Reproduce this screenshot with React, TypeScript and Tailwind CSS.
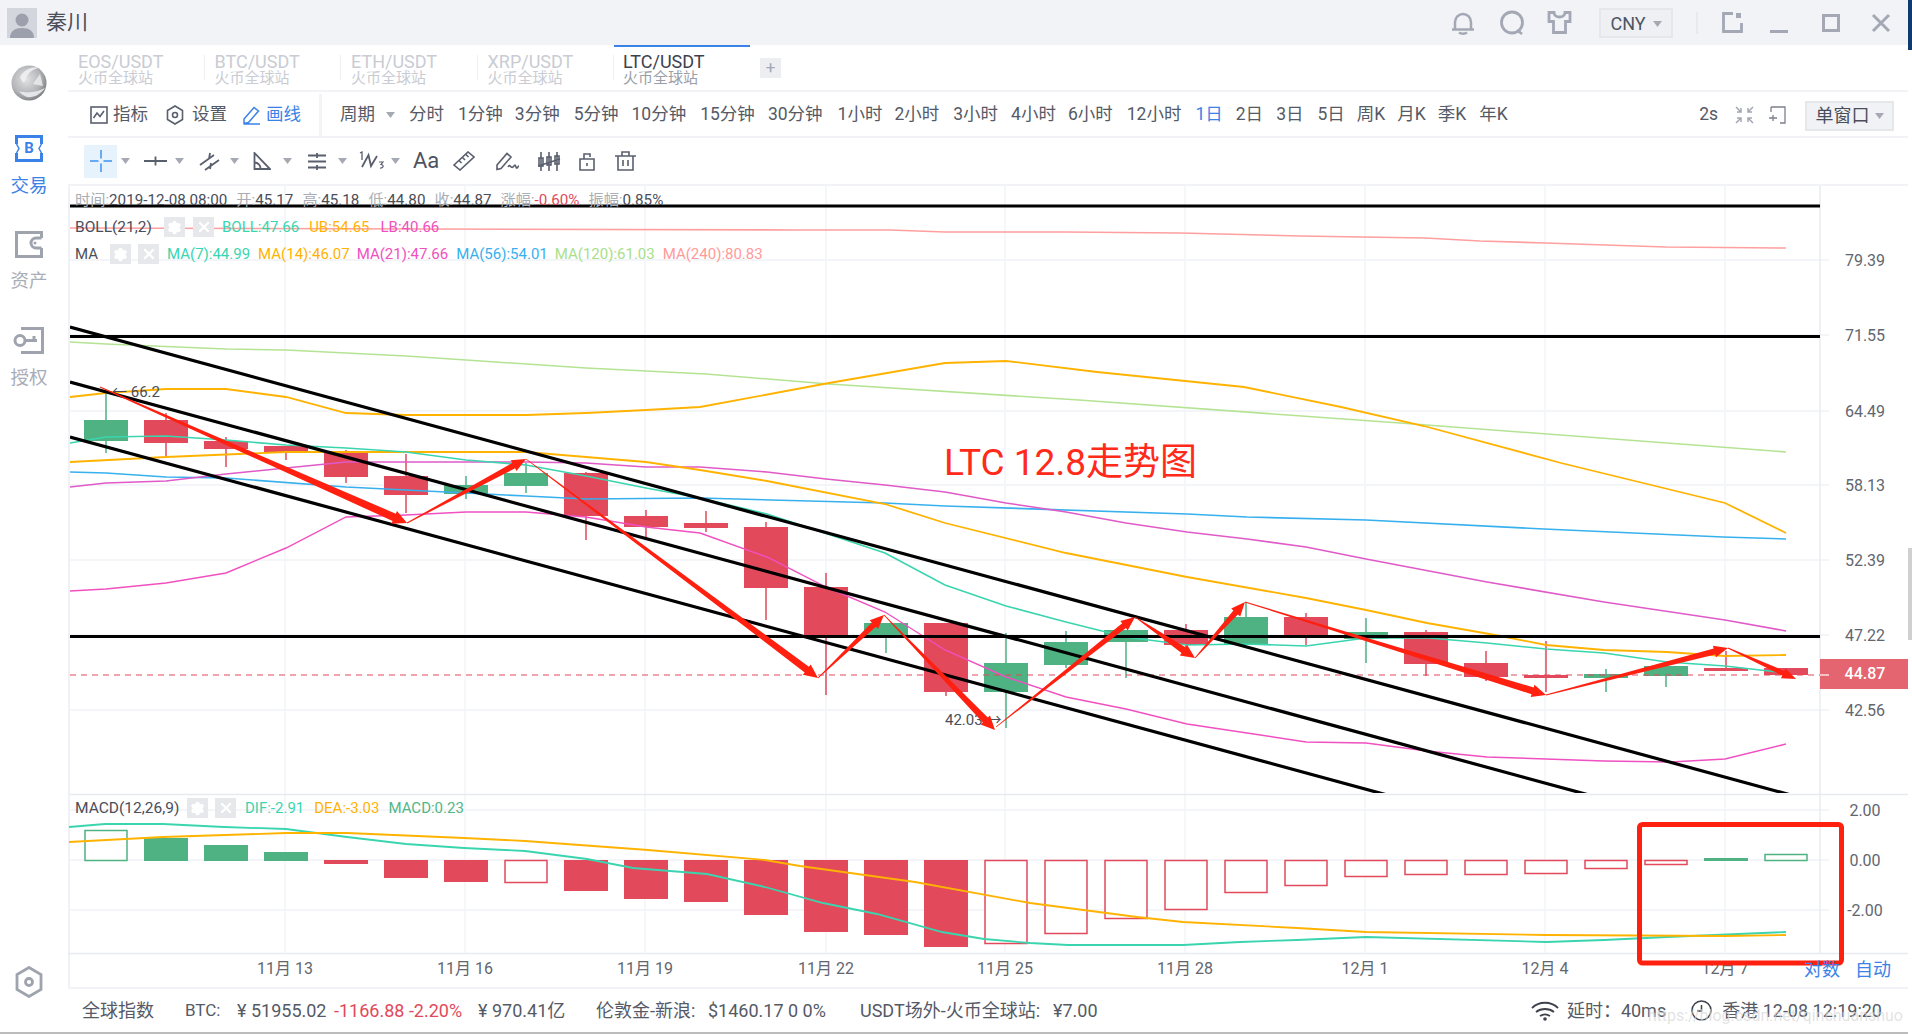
import React from "react";
import { Settings, X } from "lucide-react";

const RED = "#e2495b";
const GREEN = "#4fb283";
const ARROW = "#ff2010";
const ICON = "#5a5f6e";
const MUTED = "#a3a8b4";

// color, body top, body bottom, wick top, wick bottom
const candles: [string, number, number, number, number][] = [
  ["g", 420, 441, 393, 453],
  ["r", 420, 443, 413, 456],
  ["r", 441, 449, 437, 467],
  ["r", 446, 452, 446, 460],
  ["r", 452, 477, 450, 483],
  ["r", 476, 495, 454, 513],
  ["g", 485, 494, 476, 499],
  ["g", 473, 486, 463, 493],
  ["r", 473, 516, 472, 540],
  ["r", 516, 527, 510, 537],
  ["r", 523, 528, 511, 532],
  ["r", 527, 588, 522, 620],
  ["r", 587, 638, 573, 695],
  ["g", 623, 638, 623, 653],
  ["r", 623, 692, 623, 696],
  ["g", 663, 692, 633, 728],
  ["g", 642, 665, 631, 668],
  ["g", 630, 642, 630, 678],
  ["r", 630, 645, 624, 648],
  ["g", 617, 644, 602, 645],
  ["r", 617, 637, 613, 645],
  ["g", 632, 639, 618, 663],
  ["r", 632, 664, 630, 676],
  ["r", 663, 677, 651, 681],
  ["r", 675, 678, 641, 692],
  ["g", 674, 678, 669, 692],
  ["g", 666, 676, 666, 687],
  ["r", 668, 671, 651, 671],
  ["r", 668, 675, 668, 675],
];

// color, filled, top and bottom edge of the bar
const macdBars: [string, boolean, number, number][] = [
  ["g", false, 830, 860],
  ["g", true, 838, 861],
  ["g", true, 845, 861],
  ["g", true, 852, 861],
  ["r", true, 860, 864],
  ["r", true, 860, 878],
  ["r", true, 860, 882],
  ["r", false, 860, 882],
  ["r", true, 860, 891],
  ["r", true, 860, 899],
  ["r", true, 860, 902],
  ["r", true, 860, 915],
  ["r", true, 860, 932],
  ["r", true, 860, 935],
  ["r", true, 860, 947],
  ["r", false, 860, 943],
  ["r", false, 860, 933],
  ["r", false, 860, 918],
  ["r", false, 860, 909],
  ["r", false, 860, 892],
  ["r", false, 860, 885],
  ["r", false, 860, 876],
  ["r", false, 860, 874],
  ["r", false, 860, 874],
  ["r", false, 860, 873],
  ["r", false, 860, 868],
  ["r", false, 860, 864],
  ["g", true, 858, 861],
  ["g", false, 854, 860],
];

const lines: { color: string; width: number; pts: string }[] = [
  {
    color: "#ff9f9f",
    width: 1.6,
    pts: "70,228 800,230 890,230 945,232 1065,232 1180,233 1300,236 1425,238 1480,241 1545,243 1666,247 1786,248",
  },
  {
    color: "#b5e394",
    width: 1.6,
    pts: "70,342 106,344 226,349 286,350 406,356 466,360 586,368 706,374 829,384 1079,400 1400,423 1786,452",
  },
  {
    color: "#ffb300",
    width: 1.8,
    pts: "70,397 106,393 166,389 226,389 286,397 346,413 406,415 526,415 586,413 646,410 700,407 829,383 945,363 1006,361 1097,372 1244,387 1341,407 1424,426 1561,463 1725,503 1786,533",
  },
  {
    color: "#38b0ee",
    width: 1.6,
    pts: "70,472 106,473 166,477 226,478 346,487 406,490 526,496 586,499 700,498 885,503 945,506 1187,514 1247,517 1366,520 1544,529 1723,537 1786,539",
  },
  {
    color: "#e05ac8",
    width: 1.6,
    pts: "70,487 106,483 166,481 226,474 286,468 346,462 526,462 586,463 646,467 700,467 767,472 826,479 885,485 945,492 1006,503 1066,512 1126,523 1187,532 1247,539 1306,547 1366,559 1487,582 1604,602 1725,620 1786,631",
  },
  {
    color: "#ffb300",
    width: 1.8,
    pts: "70,462 166,457 286,452 346,452 526,452 586,457 646,462 700,470 767,481 885,504 945,523 1066,553 1187,577 1306,598 1366,610 1427,623 1495,635 1546,645 1604,650 1667,652 1725,656 1786,655",
  },
  {
    color: "#3ad5af",
    width: 1.6,
    pts: "70,443 106,437 166,436 226,440 286,445 346,448 406,452 466,460 526,465 586,476 646,488 700,498 767,514 885,553 945,585 1006,606 1066,622 1126,637 1187,645 1247,644 1306,646 1366,638 1429,638 1487,643 1546,649 1604,653 1667,662 1725,666 1786,673",
  },
  {
    color: "#f050c0",
    width: 1.4,
    pts: "70,591 106,589 166,583 226,573 286,548 346,517 406,515 466,512 526,512 586,517 646,527 700,533 767,557 826,587 885,612 945,650 1006,677 1066,697 1126,709 1187,724 1247,733 1306,742 1366,743 1427,751 1487,757 1546,759 1604,761 1671,762 1725,759 1786,744",
  },
];

const macdDif =
  "69,827 105,824 163,824 224,827 286,829 347,837 406,844 464,848 525,851 587,859 633,868 707,874 765,887 823,903 877,914 942,932 984,939 1030,943 1068,945 1183,945 1240,942 1297,940 1366,937 1546,942 1604,940 1667,937 1786,932";
const macdDea =
  "69,842 163,837 286,833 347,833 464,838 525,841 648,850 765,860 800,866 915,882 1030,903 1137,917 1183,922 1297,928 1366,932 1546,935 1725,936 1786,935";

// x1, y1, x2, y2, shaft width near the head
const arrows: [number, number, number, number, number][] = [
  [100, 387, 407, 523, 8],
  [407, 523, 526, 459, 6],
  [526, 459, 818, 678, 7],
  [818, 678, 884, 615, 6],
  [884, 615, 995, 730, 7],
  [996, 727, 1135, 617, 6],
  [1135, 617, 1195, 658, 7],
  [1195, 658, 1245, 602, 6],
  [1245, 602, 1546, 695, 7],
  [1546, 695, 1728, 648, 6],
  [1728, 648, 1796, 679, 5],
];

const arrowPoints = (x1: number, y1: number, x2: number, y2: number, w: number) => {
  const len = Math.hypot(x2 - x1, y2 - y1);
  const ux = (x2 - x1) / len;
  const uy = (y2 - y1) / len;
  const px = -uy;
  const py = ux;
  const hl = 14;
  const hw = w / 2 + 3;
  const bx = x2 - ux * hl;
  const by = y2 - uy * hl;
  const pts = [
    [x1 + px * 0.4, y1 + py * 0.4],
    [bx + (px * w) / 2, by + (py * w) / 2],
    [bx + px * hw, by + py * hw],
    [x2, y2],
    [bx - px * hw, by - py * hw],
    [bx - (px * w) / 2, by - (py * w) / 2],
    [x1 - px * 0.4, y1 - py * 0.4],
  ];
  return pts.map((p) => `${p[0].toFixed(1)},${p[1].toFixed(1)}`).join(" ");
};

const priceTicks: [string, number][] = [
  ["79.39", 260],
  ["71.55", 335],
  ["64.49", 411],
  ["58.13", 485],
  ["52.39", 560],
  ["47.22", 635],
  ["42.56", 710],
];

const dateTicks: [string, number][] = [
  ["11月 13", 285],
  ["11月 16", 465],
  ["11月 19", 645],
  ["11月 22", 826],
  ["11月 25", 1005],
  ["11月 28", 1185],
  ["12月 1", 1365],
  ["12月 4", 1545],
  ["12月 7", 1725],
];

const periods: [string, number, boolean?][] = [
  ["分时", 14],
  ["1分钟", 14],
  ["3分钟", 12],
  ["5分钟", 14],
  ["10分钟", 13],
  ["15分钟", 14],
  ["30分钟", 13],
  ["1小时", 15],
  ["2小时", 12],
  ["3小时", 14],
  ["4小时", 13],
  ["6小时", 12],
  ["12小时", 14],
  ["1日", 14, true],
  ["2日", 13],
  ["3日", 13],
  ["5日", 14],
  ["周K", 12],
  ["月K", 12],
  ["季K", 12],
  ["年K", 13],
];

const FONT = "Roboto, 'Noto Sans CJK SC', sans-serif";

const Caret = ({ className = "" }: { className?: string }) => (
  <svg width="9" height="6" viewBox="0 0 9 6" className={`shrink-0 ${className}`}>
    <path d="M0 0h9L4.5 6z" fill="#a5a9b4" />
  </svg>
);

const BoxButton = ({ kind }: { kind: "gear" | "x" }) => (
  <span className="flex h-[20px] w-[21px] items-center justify-center bg-[#e7e8eb]">
    {kind === "gear" ? (
      <Settings size={15} color="#ffffff" fill="#ffffff" strokeWidth={2} />
    ) : (
      <X size={16} color="#ffffff" strokeWidth={3.5} />
    )}
  </span>
);

const Glyph = ({
  w,
  h,
  children,
  className = "",
}: {
  w: number;
  h: number;
  children: React.ReactNode;
  className?: string;
}) => (
  <svg
    width={w}
    height={h}
    viewBox={`0 0 ${w} ${h}`}
    fill="none"
    stroke={ICON}
    strokeWidth="1.6"
    className={`shrink-0 ${className}`}
  >
    {children}
  </svg>
);

const Logo = () => (
  <svg width="36" height="36" viewBox="0 0 36 36">
    <defs>
      <radialGradient id="globe" cx="0.42" cy="0.4" r="0.65">
        <stop offset="0" stopColor="#e2e2e4" />
        <stop offset="0.65" stopColor="#b3b4b8" />
        <stop offset="1" stopColor="#77787c" />
      </radialGradient>
    </defs>
    <circle cx="18" cy="18" r="17.5" fill="url(#globe)" />
    <path d="M9 12C14 3 24 1 28 3c-7 1-12 6-14 13-1 3-3 1-5-4z" fill="#f2f2f3" opacity="0.85" />
    <path d="M8 26c8 3 18 1 26-3-5 7-12 10-18 9-3-1-6-3-8-6z" fill="#f0f0f1" opacity="0.85" />
    <path d="M22 19l7-10 3 12-10-2z" fill="#efeff0" opacity="0.8" />
  </svg>
);

const NavIcon = ({ name, color }: { name: string; color: string }) => {
  if (name === "trade") {
    return (
      <span className="relative flex h-[27px] w-[28px] items-center justify-center">
        <svg width="28" height="27" viewBox="0 0 28 27" fill="none" stroke={color} strokeWidth="3" className="absolute inset-0">
          <path d="M1.5 9V1.5h25V9M1.5 18v7.5h25V18" />
          <path d="M1.5 9l2.5 4.5L1.5 18M26.5 9L24 13.5l2.5 4.5" strokeWidth="1.5" />
        </svg>
        <span className="relative text-[15px] leading-none font-bold text-[#3b82e8]">B</span>
      </span>
    );
  }
  if (name === "assets") {
    return (
      <svg width="28" height="27" viewBox="0 0 28 27" fill="none" stroke={color} strokeWidth="3">
        <path d="M26.5 7V1.5h-25v24h25V17" />
        <path d="M26.5 7H21a5 5 0 0 0 0 10h5.500" />
        <circle cx="20" cy="12" r="1.500" fill={color} stroke="none" />
      </svg>
    );
  }
  return (
    <svg width="31" height="27" viewBox="0 0 31 27" fill="none" stroke={color} strokeWidth="3">
      <path d="M8 1.500h21.500v24H8" />
      <circle cx="7" cy="13.500" r="5" />
      <path d="M12 13.500h12M21 13.500V9" />
    </svg>
  );
};

const ChartSvg = () => (
  <svg
    width="1840"
    height="801"
    viewBox="68 186 1840 801"
    className="block"
    style={{ fontFamily: FONT }}
  >
    <defs>
      <clipPath id="priceClip">
        <rect x="70" y="186" width="1750" height="607" />
      </clipPath>
    </defs>

    {/* grid */}
    {dateTicks.map(([, x]) => (
      <line key={x} x1={x} x2={x} y1="186" y2="953" stroke="#f3f5f9" strokeWidth="1.5" />
    ))}
    {priceTicks.map(([, y]) => (
      <line key={y} x1="70" x2="1829" y1={y} y2={y} stroke="#f3f5f9" strokeWidth="2" />
    ))}
    {[810, 860, 910].map((y) => (
      <line key={y} x1="70" x2="1829" y1={y} y2={y} stroke="#f3f5f9" strokeWidth="2" />
    ))}
    <line x1="69" x2="69" y1="186" y2="987" stroke="#eff1f7" strokeWidth="2" />
    <line x1="1820" x2="1820" y1="186" y2="953" stroke="#e9ebf0" strokeWidth="1.5" />

    {/* candles */}
    {candles.map(([c, t, b, wt, wb], i) => {
      const x = 106 + i * 60;
      const fill = c === "r" ? RED : GREEN;
      return (
        <g key={i} fill={fill}>
          <rect x={x - 0.75} y={wt} width="1.5" height={wb - wt} />
          <rect x={x - 22} y={t} width="44" height={b - t} />
        </g>
      );
    })}

    {/* moving averages */}
    {lines.map((l, i) => (
      <polyline key={i} points={l.pts} fill="none" stroke={l.color} strokeWidth={l.width} />
    ))}

    <line x1="70" x2="1820" y1="675" y2="675" stroke={RED} strokeWidth="1.2" strokeDasharray="6 5" />

    {/* hand drawn trend lines */}
    <g clipPath="url(#priceClip)" stroke="#000000" strokeWidth="3.200">
      <line x1="70" y1="206" x2="1820" y2="206" />
      <line x1="70" y1="336.500" x2="1820" y2="336.500" />
      <line x1="70" y1="636.500" x2="1820" y2="636.500" />
      <line x1="70" y1="327" x2="1800" y2="797.500" />
      <line x1="70" y1="382" x2="1600" y2="798" />
      <line x1="70" y1="437" x2="1400" y2="798.500" />
    </g>

    <text x="112" y="397" fontSize="15" fill="#4a4e5a">← 66.2</text>
    <text x="945" y="725" fontSize="15" fill="#4a4e5a">42.03 →</text>

    {arrows.map(([x1, y1, x2, y2, w], i) => (
      <polygon key={i} points={arrowPoints(x1, y1, x2, y2, w)} fill={ARROW} />
    ))}

    <text x="944" y="475" fontSize="37" fill="#ff2a1a">LTC 12.8走势图</text>

    {/* axes */}
    {priceTicks.map(([label, y]) => (
      <text key={label} x="1865" y={y + 6} fontSize="16" textAnchor="middle" fill="#62666f">
        {label}
      </text>
    ))}
    <rect x="1820" y="659" width="88" height="30" fill="#e4656f" />
    <line x1="1820" x2="1829" y1="675" y2="675" stroke="#ffffff" strokeWidth="1.200" />
    <text x="1865" y="679" fontSize="16" fontWeight="500" textAnchor="middle" fill="#ffffff">44.87</text>

    {/* macd */}
    <line x1="70" x2="1908" y1="794.500" y2="794.500" stroke="#e8eaef" strokeWidth="1.500" />
    {macdBars.map(([c, solid, top, bottom], i) => {
      const x = 106 + i * 60;
      const col = c === "r" ? RED : GREEN;
      return solid ? (
        <rect key={i} x={x - 22} y={top} width="44" height={bottom - top} fill={col} />
      ) : (
        <rect key={i} x={x - 21} y={top + 0.5} width="42" height={bottom - top} fill="#ffffff" stroke={col} strokeWidth="1.500" />
      );
    })}
    <polyline points={macdDif} fill="none" stroke="#3ad5af" strokeWidth="1.800" />
    <polyline points={macdDea} fill="none" stroke="#ffb300" strokeWidth="1.800" />
    {[
      ["2.00", 810],
      ["0.00", 860],
      ["-2.00", 910],
    ].map(([label, y]) => (
      <text key={label} x="1865" y={Number(y) + 6} fontSize="16" textAnchor="middle" fill="#62666f">
        {label}
      </text>
    ))}
    <line x1="68" x2="1908" y1="953.500" y2="953.500" stroke="#e8eaef" strokeWidth="1.500" />
    {dateTicks.map(([label, x]) => (
      <text key={label} x={x} y="974" fontSize="16" textAnchor="middle" fill="#62666f">
        {label}
      </text>
    ))}

    <rect x="1639.500" y="824.500" width="202" height="138.500" rx="3" fill="none" stroke={ARROW} strokeWidth="5" />
  </svg>
);

export default function App() {
  return (
    <div className="flex h-[1034px] w-[1912px] overflow-hidden bg-white text-[#555a66] font-[Roboto,'Noto_Sans_CJK_SC',sans-serif]">
      <div className="flex w-[1908px] flex-col">
        {/* title bar */}
        <div className="flex h-[45px] shrink-0 items-center bg-[#f2f3f7] pl-[7px]">
          <div className="flex h-[30px] w-[30px] items-end justify-center overflow-hidden bg-[#d3d6dc]">
            <svg width="30" height="30" viewBox="0 0 30 30" fill="#9ba0ac">
              <circle cx="15" cy="12" r="6.500" />
              <path d="M3 30c0-7 5-10 12-10s12 3 12 10z" />
            </svg>
          </div>
          <span className="ml-[9px] text-[21px] text-[#4a4e5a]">秦川</span>
          <div className="ml-auto flex items-center pr-[17px]">
            <svg width="24" height="24" viewBox="0 0 24 24" fill="none" stroke={MUTED} strokeWidth="2.500">
              <path d="M4 18V11a8 8 0 0 1 16 0v7" />
              <path d="M1 18.500h22" />
              <path d="M8 21.500a5 3 0 0 0 8 0" />
            </svg>
            <svg width="26" height="26" viewBox="0 0 26 26" fill="none" stroke={MUTED} strokeWidth="2.800" className="ml-[24px]">
              <circle cx="13" cy="12.500" r="10.500" />
              <path d="M18 20l5 4" />
            </svg>
            <svg width="25" height="23" viewBox="0 0 25 23" fill="none" stroke={MUTED} strokeWidth="2.800" className="ml-[22px]">
              <path d="M7 1.500H2v9h4.500v11h12v-11H23v-9h-5c0 6-11 6-11 0z" />
            </svg>
            <div className="ml-[27px] flex h-[30px] w-[74px] items-center justify-center gap-[7px] border-2 border-[#e5e7eb] bg-[#eff0f4] pt-[2px] text-[18px] leading-[24px] text-[#4b5563]">
              CNY
              <Caret />
            </div>
            <div className="ml-[23px] h-[22px] w-[2px] bg-[#e7e9ee]" />
            <svg width="21" height="21" viewBox="0 0 21 21" fill="none" stroke={MUTED} strokeWidth="2.800" className="ml-[24px]">
              <path d="M11 1.500H1.500v18h18V11" />
              <rect x="14" y="1" width="5" height="5" fill={MUTED} stroke="none" />
            </svg>
            <div className="ml-[27px] mt-[17px] h-[3px] w-[18px] bg-[#a3a8b4]" />
            <div className="ml-[34px] h-[18px] w-[18px] border-[3px] border-[#a3a8b4]" />
            <svg width="20" height="20" viewBox="0 0 20 20" stroke={MUTED} strokeWidth="3" className="ml-[31px]">
              <path d="M2 2l16 16M18 2L2 18" />
            </svg>
          </div>
        </div>

        <div className="flex min-h-0 flex-1">
          {/* side nav */}
          <nav className="flex w-[68px] shrink-0 flex-col items-center pt-[20px] pr-[10px] text-[18.5px] text-[#a9adb8]">
            <Logo />
            <div className="mt-[34px] flex flex-col items-center text-[#3b82e8]">
              <NavIcon name="trade" color="#3b82e8" />
              <span className="mt-[12px] leading-[24px]">交易</span>
            </div>
            <div className="mt-[33px] flex flex-col items-center">
              <NavIcon name="assets" color="#9ea3ae" />
              <span className="mt-[11px] leading-[24px]">资产</span>
            </div>
            <div className="mt-[34px] flex flex-col items-center">
              <NavIcon name="auth" color="#9ea3ae" />
              <span className="mt-[12px] leading-[24px]">授权</span>
            </div>
            <svg width="28" height="32" viewBox="0 0 28 32" fill="none" stroke="#9ea3ae" strokeWidth="2.800" className="mt-auto mb-[34px]">
              <path d="M14 1.500l12 7v15l-12 7-12-7v-15z" />
              <circle cx="14" cy="16" r="3.500" />
            </svg>
          </nav>

          <div className="flex min-w-0 flex-1 flex-col">
            {/* tabs */}
            <div className="flex h-[45px] shrink-0 items-center">
              {["EOS/USDT", "BTC/USDT", "ETH/USDT", "XRP/USDT"].map((t) => (
                <div key={t} className="flex h-full w-[136.5px] items-center pl-[10px]">
                  <div className="flex-1 pt-[4px] text-[#c9ccd3]">
                    <div className="text-[18px] leading-[16px]">{t}</div>
                    <div className="text-[15px] leading-[16px]">火币全球站</div>
                  </div>
                  <div className="h-[25px] w-px bg-[#eef0f3]" />
                </div>
              ))}
              <div className="flex h-full w-[136px] items-center border-t-2 border-[#3b82e8] pl-[9px]">
                <div className="pt-[2px]">
                  <div className="text-[18px] leading-[16px] text-[#3d414c]">LTC/USDT</div>
                  <div className="text-[15px] leading-[16px] text-[#9a9ea9]">火币全球站</div>
                </div>
              </div>
              <div className="ml-[10px] flex h-[20px] w-[21px] items-center justify-center bg-[#eceef2] text-[17px] leading-none text-[#a3a8b4]">
                +
              </div>
            </div>

            {/* period toolbar */}
            <div className="flex h-[46px] shrink-0 items-center border-t-2 border-[#f2f3f7] pt-[2px] text-[17.5px] leading-none whitespace-nowrap">
              <div className="flex h-full w-[254px] shrink-0 items-center border-r-[3px] border-[#f3f4f8] pl-[22px]">
                <Glyph w={18} h={18}>
                  <rect x="1" y="1" width="16" height="16" />
                  <path d="M3.500 12l3.500-5 3 3.500L14 5" />
                </Glyph>
                <span className="ml-[5px]">指标</span>
                <Glyph w={18} h={20} className="ml-[18px]">
                  <path d="M9 1l7.500 4.500v9L9 19l-7.500-4.500v-9z" />
                  <circle cx="9" cy="10" r="2.500" />
                </Glyph>
                <span className="ml-[8px]">设置</span>
                <svg width="18" height="19" viewBox="0 0 18 19" fill="none" stroke="#3b82e8" strokeWidth="1.500" className="ml-[16px] shrink-0">
                  <path d="M1 13L11 1.500l4.500 3.500L5.500 16.500 1 17.500zM1 18h16" />
                </svg>
                <span className="ml-[5px] text-[#3b82e8]">画线</span>
              </div>
              <span className="ml-[18px]">周期</span>
              <Caret className="ml-[11px]" />
              {periods.map(([p, gap, active]) => (
                <span key={p} style={{ marginLeft: gap, color: active ? "#3b82e8" : undefined }}>
                  {p}
                </span>
              ))}
              <span className="ml-auto">2s</span>
              <svg width="19" height="18" viewBox="0 0 19 18" fill="none" stroke="#a3a8b4" strokeWidth="1.500" className="ml-[17px]">
                <path d="M1 1l5 5M6 2v4H2M18 1l-5 5M13 2v4h4M1 17l5-5M6 16v-4H2M18 17l-5-5M13 16v-4h4" />
              </svg>
              <svg width="19" height="18" viewBox="0 0 19 18" fill="none" stroke="#7c808b" strokeWidth="1.300" className="ml-[14px]">
                <path d="M3 1h14v16h-5M1 12h8M5 9v6" />
                <path d="M3 1v5" />
              </svg>
              <div className="ml-[18px] mr-[14px] mt-[2px] flex h-[30px] w-[89px] items-center justify-center gap-[5px] border-2 border-[#e5e7eb] bg-[#f1f2f5] text-[18px] text-[#4a4e5a]">
                单窗口
                <Caret />
              </div>
            </div>

            {/* drawing toolbar */}
            <div className="flex h-[50px] shrink-0 items-center border-y-2 border-[#f2f3f7]">
              <div className="ml-[16px] flex h-[33px] w-[33px] items-center justify-center bg-[#e6f3fd]">
                <svg width="22" height="22" viewBox="0 0 22 22" stroke="#67a9f5" strokeWidth="2">
                  <path d="M0 11h8.500M13.500 11H22M11 0v8.500M11 13.500V22" />
                </svg>
              </div>
              <Caret className="ml-[4px]" />
              <Glyph w={23} h={12} className="ml-[14px]">
                <path d="M0 6h23M11.500 1.500v9" strokeWidth="1.800" />
              </Glyph>
              <Caret className="ml-[8px]" />
              <Glyph w={21} h={19} className="ml-[15px]">
                <path d="M1 13L15 3M6 18l14-10M11 1l-1 6M12 11l-1 6" strokeWidth="1.800" />
              </Glyph>
              <Caret className="ml-[10px]" />
              <Glyph w={18} h={18} className="ml-[14px]">
                <path d="M1.500 1v16h15.500zM1.500 10.500a6 6 0 0 1 6 6.500" strokeWidth="1.800" />
              </Glyph>
              <Caret className="ml-[12px]" />
              <Glyph w={18} h={17} className="ml-[16px]">
                <path d="M0 2.500h18M0 8.500h18M0 14.500h18M9 0v5M9 12v5" strokeWidth="1.800" />
              </Glyph>
              <Caret className="ml-[12px]" />
              <Glyph w={25} h={20} className="ml-[12px]">
                <path d="M1 2l2-1v8" strokeWidth="1.300" />
                <path d="M3 16L9.500 4 12 15 18 5" strokeWidth="1.800" />
                <path d="M20 11h4l-2 2.500c3 0 3 4-1 3.500" strokeWidth="1.200" />
              </Glyph>
              <Caret className="ml-[7px]" />
              <span className="ml-[13px] text-[22px] leading-none text-[#4f535f]">Aa</span>
              <Glyph w={22} h={20} className="ml-[14px]">
                <path d="M1 14L15 1l6 5L7 19zM6 9.500l2.500 2.500M9.500 6.500L12 9M13 3.500l2.500 2.500" />
              </Glyph>
              <Glyph w={24} h={20} className="ml-[21px]">
                <path d="M1 14L11 2.500 15 6 5 17.500l-4 1zM12 16c2-4 3 2 5 0s2-3 3 0 2-1 3-1" />
              </Glyph>
              <Glyph w={24} h={19} className="ml-[17px]">
                <rect x="2" y="6" width="4" height="8" />
                <rect x="10" y="5" width="4" height="8" />
                <rect x="18" y="4" width="4" height="8" />
                <path d="M4 0v19M12 0v19M20 0v19M1 14l22-7" />
              </Glyph>
              <Glyph w={16} h={19} className="ml-[18px]">
                <path d="M1 7h14v11H1zM5 7V2h6v3M8 11v3" />
              </Glyph>
              <Glyph w={21} h={20} className="ml-[20px]">
                <path d="M3 5h15v14H3zM0 5h21M7 5V1h7v4M8 9v6M13 9v6" />
              </Glyph>
            </div>

            {/* chart with legends laid over it */}
            <div className="relative h-[801px] shrink-0">
              <ChartSvg />
              <div className="absolute top-[7px] left-[7px] flex items-center whitespace-nowrap text-[15.2px] leading-[15px] text-[#4a4e5a]">
                <span className="text-[#a9adb6]">时间:</span>2019-12-08 08:00
                <span className="ml-[9px] text-[#a9adb6]">开:</span>45.17
                <span className="ml-[9px] text-[#a9adb6]">高:</span>45.18
                <span className="ml-[9px] text-[#a9adb6]">低:</span>44.80
                <span className="ml-[9px] text-[#a9adb6]">收:</span>44.87
                <span className="ml-[9px] text-[#a9adb6]">涨幅:</span>
                <span className="text-[#e2495b]">-0.60%</span>
                <span className="ml-[9px] text-[#a9adb6]">振幅:</span>0.85%
              </div>
              <div className="absolute top-[31px] left-[7px] flex items-center whitespace-nowrap text-[15px] leading-[20px]">
                <span className="w-[89px] text-[15.5px] text-[#4a4e5a]">BOLL(21,2)</span>
                <BoxButton kind="gear" />
                <span className="ml-[8px]"><BoxButton kind="x" /></span>
                <span className="ml-[8px] text-[#3ad5af]">BOLL:47.66</span>
                <span className="ml-[10px] text-[#ffb300]">UB:54.65</span>
                <span className="ml-[11px] text-[#f050c0]">LB:40.66</span>
              </div>
              <div className="absolute top-[58px] left-[7px] flex items-center whitespace-nowrap text-[15px] leading-[20px]">
                <span className="w-[35px] text-[#4a4e5a]">MA</span>
                <BoxButton kind="gear" />
                <span className="ml-[7px]"><BoxButton kind="x" /></span>
                <span className="ml-[8px] text-[#3ad5af]">MA(7):44.99</span>
                <span className="ml-[8px] text-[#ffb300]">MA(14):46.07</span>
                <span className="ml-[7px] text-[#f050c0]">MA(21):47.66</span>
                <span className="ml-[8px] text-[#38b0ee]">MA(56):54.01</span>
                <span className="ml-[7px] text-[#a8e08a]">MA(120):61.03</span>
                <span className="ml-[8px] text-[#ff9a9a]">MA(240):80.83</span>
              </div>
              <div className="absolute top-[612px] left-[7px] flex items-center whitespace-nowrap text-[15px] leading-[20px]">
                <span className="w-[112px] text-[15.5px] text-[#4a4e5a]">MACD(12,26,9)</span>
                <BoxButton kind="gear" />
                <span className="ml-[7px]"><BoxButton kind="x" /></span>
                <span className="ml-[9px] text-[#3ad5af]">DIF:-2.91</span>
                <span className="ml-[10px] text-[#ffb300]">DEA:-3.03</span>
                <span className="ml-[9px] text-[#52b788]">MACD:0.23</span>
              </div>
              <div className="absolute right-[17px] bottom-[5px] flex gap-[15px] text-[18px] leading-[24px] text-[#3b82e8]">
                <span>对数</span>
                <span>自动</span>
              </div>
            </div>

            {/* status bar */}
            <div className="relative flex flex-1 items-center border-t-2 border-[#f2f3f7] text-[18px] leading-none whitespace-nowrap">
              <span className="ml-[14px] w-[103px]">全球指数</span>
              <span className="w-[52px] text-[17px]">BTC:</span>
              <span className="w-[97px]">¥ 51955.02</span>
              <span className="w-[144px] text-[#e2495b]">-1166.88 -2.20%</span>
              <span className="w-[118px]">¥ 970.41亿</span>
              <span className="w-[112px]">伦敦金-新浪:</span>
              <span className="w-[152px]">$1460.17 0 0%</span>
              <span className="w-[193px]">USDT场外-火币全球站:</span>
              <span>¥7.00</span>
              <svg width="28" height="20" viewBox="0 0 28 20" fill="none" stroke="#3d414c" strokeWidth="1.800" className="ml-auto">
                <path d="M1 7c7-7 19-7 26 0M5 11c5-4 13-4 18 0M9 15c3-2 7-2 10 0" />
                <circle cx="14" cy="18" r="1.800" fill="#3d414c" stroke="none" />
              </svg>
              <span className="ml-[8px]">延时：40ms</span>
              <svg width="21" height="21" viewBox="0 0 21 21" fill="none" stroke="#3d414c" strokeWidth="1.500" className="ml-[25px]">
                <circle cx="10.500" cy="10.500" r="9.500" />
                <path d="M10.500 5v6H6" />
              </svg>
              <span className="ml-[10px] mr-[26px]">香港 12-08 12:19:20</span>
              <span className="absolute top-[19px] right-[5px] text-[16px] leading-none text-[#d7d7d7]/70">
                https://blog.csdn.net/qinchuanshuo
              </span>
            </div>
          </div>
        </div>
        <div className="h-[2px] shrink-0 bg-[#bcbcbc]" />
      </div>

      {/* window edge */}
      <div className="flex w-[4px] shrink-0 flex-col">
        <div className="h-[50px] bg-[#0e3a6e]" />
        <div className="mt-[498px] h-[92px] bg-[#d0d0d0]" />
      </div>
    </div>
  );
}
